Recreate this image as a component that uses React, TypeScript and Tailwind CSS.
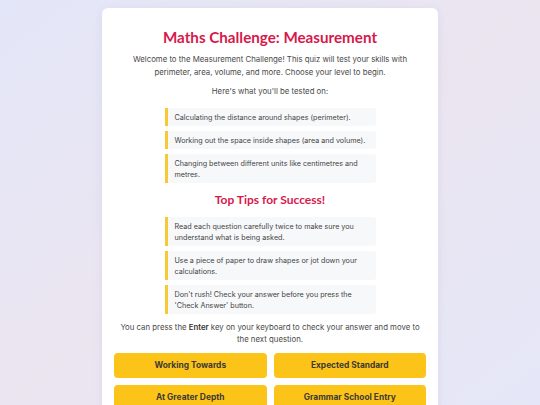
import React from "react";

const tested = [
  "Calculating the distance around shapes (perimeter).",
  "Working out the space inside shapes (area and volume).",
  "Changing between different units like centimetres and metres.",
];

const tips = [
  "Read each question carefully twice to make sure you understand what is being asked.",
  "Use a piece of paper to draw shapes or jot down your calculations.",
  "Don't rush! Check your answer before you press the 'Check Answer' button.",
];

const levels = ["Working Towards", "Expected Standard", "At Greater Depth", "Grammar School Entry"];

function Item({ text }: { text: string }) {
  return (
    <li className="bg-[#f7f8fa] border-l-[3px] border-[#f7c933] rounded-r-[3px] pl-[7px] pr-[4px] py-[3.5px] text-[7.2px] leading-[11px] text-[#444]">
      {text}
    </li>
  );
}

export default function App() {
  return (
    <div
      className="w-[540px] h-[405px] overflow-hidden bg-gradient-to-br from-[#e3e6f8] via-[#ebe5f0] to-[#e5e7f8] flex justify-center"
      style={{ fontFamily: "Inter, 'Noto Sans', sans-serif" }}
    >
      <div className="mt-[8px] w-[336px] h-[420px] bg-white rounded-[6px] shadow-[0_2px_10px_rgba(80,80,140,0.08)] px-3 pt-[17px] flex flex-col">
        <h1
          className="text-center text-[15.2px] leading-[24px] font-bold text-[#d6194b]"
          style={{ fontFamily: "Lato, 'Noto Sans', sans-serif" }}
        >
          Maths Challenge: Measurement
        </h1>
        <p className="mt-[4px] text-center text-[7.8px] leading-[12.5px] text-[#4a4a4a]">
          Welcome to the Measurement Challenge! This quiz will test your skills with perimeter, area, volume, and more. Choose your level to begin.
        </p>
        <p className="mt-[7px] text-center text-[7.8px] leading-[12px] text-[#4a4a4a]">Here's what you'll be tested on:</p>
        <ul className="mt-[11px] w-[211px] mx-auto flex flex-col gap-[5px]">
          {tested.map((t) => (
            <Item key={t} text={t} />
          ))}
        </ul>
        <h2
          className="mt-[9px] text-center text-[12px] leading-[16px] font-bold text-[#d6194b]"
          style={{ fontFamily: "Lato, 'Noto Sans', sans-serif" }}
        >
          Top Tips for Success!
        </h2>
        <ul className="mt-[9px] w-[211px] mx-auto flex flex-col gap-[5px]">
          {tips.map((t) => (
            <Item key={t} text={t} />
          ))}
        </ul>
        <p className="mt-[7px] px-[2px] text-center text-[7.8px] leading-[12px] text-[#4a4a4a]">
          You can press the <strong className="font-semibold text-[#333]">Enter</strong> key on your keyboard to check your answer and move to the next question.
        </p>
        <div className="mt-[8px] grid grid-cols-2 gap-[7px]">
          {levels.map((l) => (
            <button
              key={l}
              className="h-[25px] rounded-[4px] bg-[#fcc419] text-[#3d3a33] text-[8.4px] font-bold"
            >
              {l}
            </button>
          ))}
        </div>
      </div>
    </div>
  );
}
